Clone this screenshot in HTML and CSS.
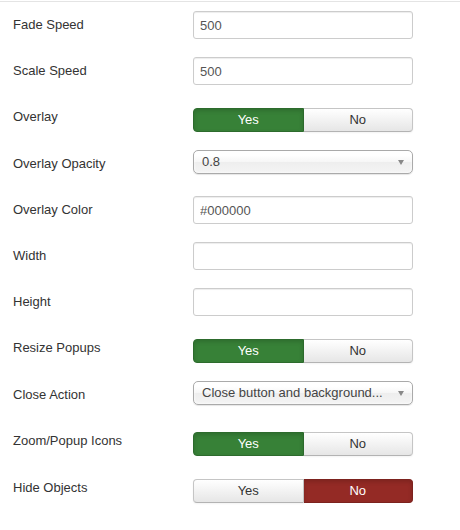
FILE: index.html
```html
<!DOCTYPE html>
<html lang="en">
<head>
  <meta charset="UTF-8">
  <meta name="viewport" content="width=device-width, initial-scale=1.0">
  <title>Popup Options</title>
  <link rel="stylesheet" href="styles.css">
</head>
<body>
  <div class="topline"></div>

  <form class="form">
    <div class="row">
      <label class="label">Fade Speed</label>
      <input class="input" type="text" value="500">
    </div>

    <div class="row">
      <label class="label">Scale Speed</label>
      <input class="input" type="text" value="500">
    </div>

    <div class="row">
      <label class="label">Overlay</label>
      <div class="btns">
        <span class="btn yes-on">Yes</span>
        <span class="btn">No</span>
      </div>
    </div>

    <div class="row">
      <label class="label">Overlay Opacity</label>
      <div class="select">
        <span class="select-text">0.8</span>
        <span class="arrow"></span>
      </div>
    </div>

    <div class="row">
      <label class="label">Overlay Color</label>
      <input class="input" type="text" value="#000000">
    </div>

    <div class="row">
      <label class="label">Width</label>
      <input class="input" type="text" value="">
    </div>

    <div class="row">
      <label class="label">Height</label>
      <input class="input" type="text" value="">
    </div>

    <div class="row">
      <label class="label">Resize Popups</label>
      <div class="btns">
        <span class="btn yes-on">Yes</span>
        <span class="btn">No</span>
      </div>
    </div>

    <div class="row">
      <label class="label">Close Action</label>
      <div class="select">
        <span class="select-text">Close button and background...</span>
        <span class="arrow"></span>
      </div>
    </div>

    <div class="row">
      <label class="label">Zoom/Popup Icons</label>
      <div class="btns">
        <span class="btn yes-on">Yes</span>
        <span class="btn">No</span>
      </div>
    </div>

    <div class="row">
      <label class="label">Hide Objects</label>
      <div class="btns">
        <span class="btn">Yes</span>
        <span class="btn no-on">No</span>
      </div>
    </div>

    <div class="row faded">
      <label class="label">Scrolling</label>
      <span class="plain">Scrolling</span>
    </div>
  </form>
</body>
</html>
```

FILE: styles.css
```css
*, *::before, *::after { box-sizing: border-box; }
body { margin: 0; font-family: "Liberation Sans", Arial, Helvetica, sans-serif; font-size: 13px; line-height: 18px; color: #333; background: #fff; }

.topline { height: 1px; margin-top: 1px; background: #e4e4e4; }

.form { margin: 0; padding: 9px 0 0 13px; }
.row { display: flex; align-items: flex-start; margin-bottom: 18px; }
.row.faded { opacity: 0.35; }
.label { width: 180px; flex-shrink: 0; padding-top: 5px; line-height: 18px; color: #333; }
.plain { padding: 5px 0 0 17px; }

.input { width: 220px; height: 28px; padding: 4px 6px; border: 1px solid #ccc; border-radius: 3px; font: inherit; color: #555; background: #fff; box-shadow: inset 0 1px 1px rgba(0, 0, 0, 0.075); }

.btns { display: flex; width: 220px; margin-top: 5px; }
.btn { flex: 1; height: 24px; line-height: 22px; text-align: center; color: #333; border: 1px solid #c5c5c5; border-bottom-color: #b3b3b3; background: linear-gradient(#fff, #e6e6e6); box-shadow: inset 0 1px 0 rgba(255, 255, 255, 0.2), 0 1px 2px rgba(0, 0, 0, 0.05); }
.btn:first-child { border-radius: 4px 0 0 4px; }
.btn:last-child { border-radius: 0 4px 4px 0; border-left: none; }
.btn.yes-on { background: #378137; border-color: #2d6b2d; color: #fff; box-shadow: inset 0 2px 4px rgba(0, 0, 0, 0.15); }
.btn.no-on { background: #942a25; border-color: #7c221e; color: #fff; box-shadow: inset 0 2px 4px rgba(0, 0, 0, 0.15); }

.select { display: flex; align-items: center; width: 220px; height: 24px; margin-bottom: 4px; padding: 0 8px; border: 1px solid #aaa; border-radius: 5px; background: linear-gradient(#fff 20%, #f6f6f6 50%, #eee 52%, #f4f4f4); box-shadow: inset 0 0 3px #fff, 0 1px 1px rgba(0, 0, 0, 0.1); color: #444; }
.select-text { flex: 1; min-width: 0; overflow: hidden; white-space: nowrap; text-overflow: ellipsis; }
.arrow { width: 0; height: 0; margin-left: 12px; border-left: 3.5px solid transparent; border-right: 3.5px solid transparent; border-top: 5px solid #888; }
```
